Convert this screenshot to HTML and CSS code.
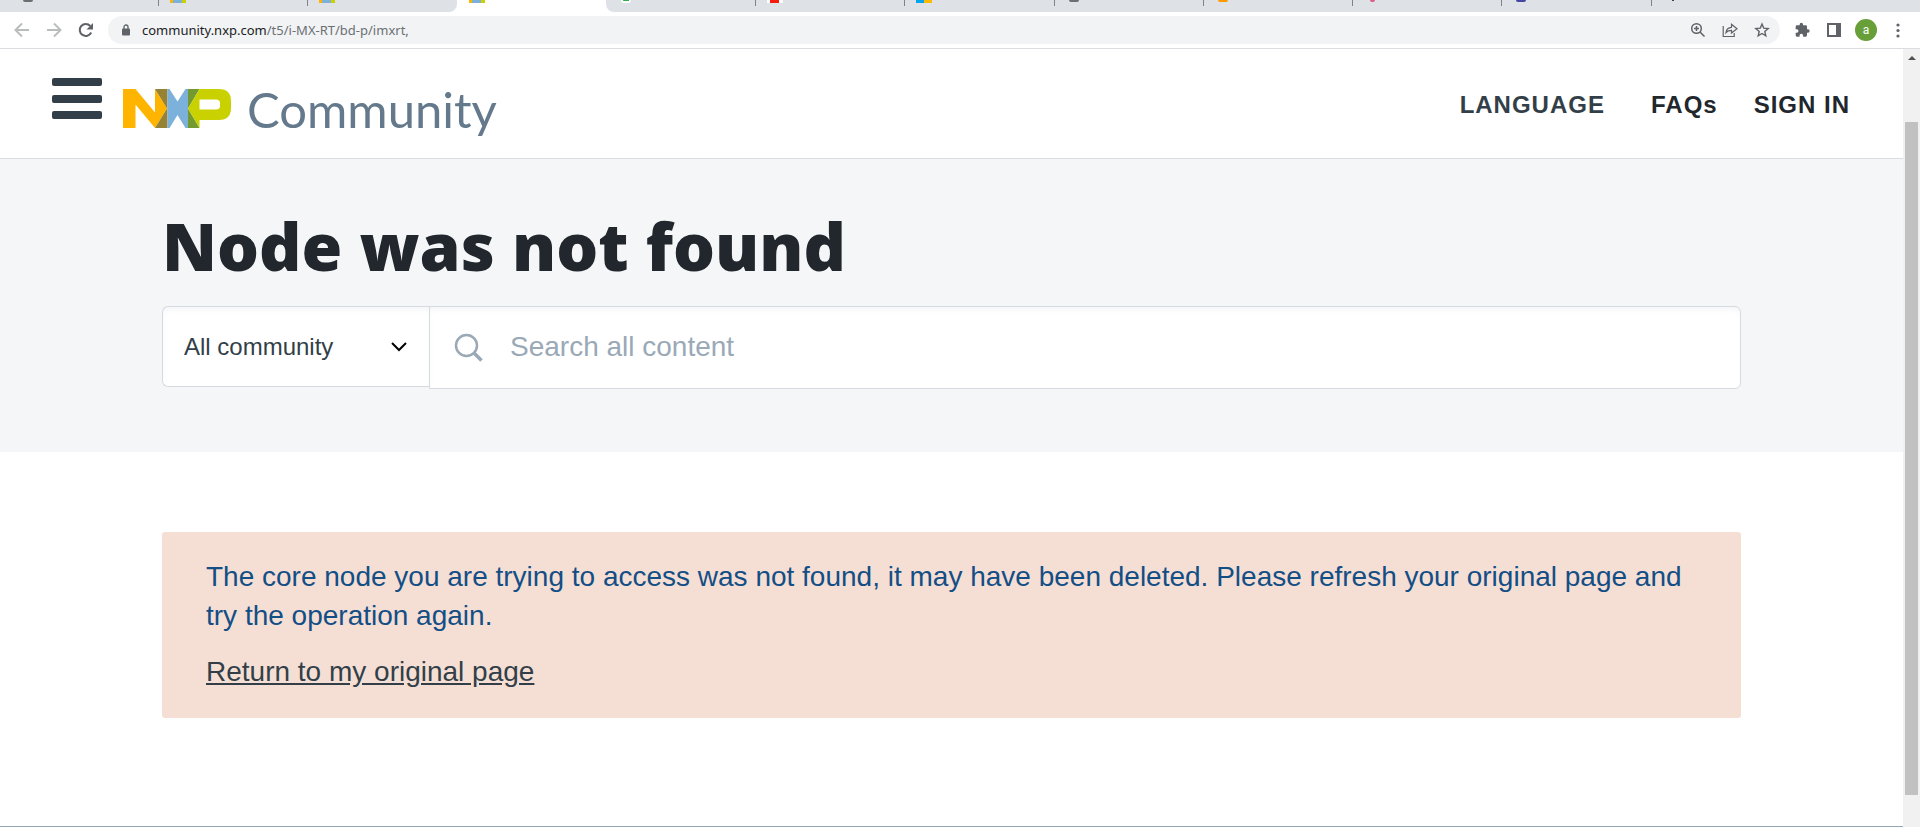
FILE: index.html
```
<!DOCTYPE html>
<html lang="en">
<head>
  <meta charset="UTF-8">
  <meta name="viewport" content="width=device-width, initial-scale=1.0">
  <title>Node was not found - NXP Community</title>
  <link rel="stylesheet" href="styles.css">
</head>
<body>
  <div class="browser">
    <div class="tabs">
      <div class="tab first"><i class="fav dot"></i></div>
      <div class="tab"><i class="fav nxp"></i></div>
      <div class="tab"><i class="fav nxp"></i></div>
      <div class="tab active"><i class="fav nxp"></i></div>
      <div class="tab"><i class="fav green"></i></div>
      <div class="tab"><i class="fav red"></i></div>
      <div class="tab"><i class="fav ms"></i></div>
      <div class="tab"><i class="fav dot"></i></div>
      <div class="tab"><i class="fav orange"></i></div>
      <div class="tab"><i class="fav pink"></i></div>
      <div class="tab"><i class="fav blue"></i></div>
      <div class="tab last"><i class="plus"></i></div>
    </div>
    <div class="toolbar">
      <button class="tool" aria-label="Back">
        <svg width="16" height="16" viewBox="0 0 16 16" fill="none" stroke="#babcbe" stroke-width="2"><path d="M15 8H2M8 1.500L1.500 8L8 14.500"/></svg>
      </button>
      <button class="tool" aria-label="Forward">
        <svg width="16" height="16" viewBox="0 0 16 16" fill="none" stroke="#babcbe" stroke-width="2"><path d="M1 8h13M8 1.500L14.500 8L8 14.500"/></svg>
      </button>
      <button class="tool" aria-label="Reload">
        <svg width="16" height="16" viewBox="0 0 16 16"><path d="M13.200 10.500A6 6 0 1 1 12.300 4" fill="none" stroke="#5f6368" stroke-width="2"/><path d="M15 1v6.500H8.500z" fill="#5f6368"/></svg>
      </button>
      <div class="address">
        <svg width="8" height="12" viewBox="0 0 8 12"><path d="M2 5V3a2 2 0 0 1 4 0v2" fill="none" stroke="#5f6368" stroke-width="1.300"/><rect y="4.500" width="8" height="7" rx="1" fill="#5f6368"/></svg>
        <span class="url">community.nxp.com<span>/t5/i-MX-RT/bd-p/imxrt,</span></span>
        <button class="tool" aria-label="Zoom">
          <svg width="16" height="16" viewBox="0 0 16 16" fill="none" stroke="#5f6368" stroke-width="1.500"><circle cx="6.500" cy="6.500" r="4.800"/><path d="M10 10l4.500 4.500M6.500 4v5M4 6.500h5"/></svg>
        </button>
        <button class="tool" aria-label="Share">
          <svg width="16" height="16" viewBox="0 0 16 16" fill="none" stroke="#5f6368" stroke-width="1.200"><path d="M1.200 4v10.500h11V11M4 10.500C4.500 7 6.500 5.500 9.500 5.300V2.300L15 6.800L9.500 11V8.300C7 8.300 5.500 8.800 4 10.500z"/></svg>
        </button>
        <button class="tool" aria-label="Bookmark">
          <svg width="16" height="16" viewBox="0 0 16 16" fill="none" stroke="#5f6368" stroke-width="1.400"><path d="M8 2l1.700 4.100l4.500.4l-3.400 2.900l1 4.400L8 11.500l-3.800 2.300l1-4.400L1.800 6.500l4.500-.4z"/></svg>
        </button>
      </div>
      <button class="tool" aria-label="Extensions">
        <svg width="16" height="16" viewBox="0 0 24 24" fill="#5f6368"><path d="M21 11h-1.500V7a2 2 0 0 0-2-2h-4V3.500a2.500 2.500 0 0 0-5 0V5h-4a2 2 0 0 0-2 2v3.800H4a2.700 2.700 0 0 1 0 5.400H2.500V20a2 2 0 0 0 2 2h3.800v-1.500a2.700 2.700 0 0 1 5.400 0V22h3.800a2 2 0 0 0 2-2v-4H21a2.500 2.500 0 0 0 0-5z"/></svg>
      </button>
      <button class="tool" aria-label="Side panel">
        <svg width="16" height="14" viewBox="0 0 16 14"><rect x="2" y="1" width="12" height="12" fill="#fff" stroke="#5f6368" stroke-width="2"/><path d="M10 1h4v12h-4z" fill="#5f6368"/></svg>
      </button>
      <button class="avatar">a</button>
      <button class="tool" aria-label="Menu">
        <svg width="16" height="16" viewBox="0 0 16 16" fill="#5f6368"><circle cx="8" cy="3" r="1.600"/><circle cx="8" cy="8.500" r="1.600"/><circle cx="8" cy="14" r="1.600"/></svg>
      </button>
    </div>
  </div>

  <div class="viewport">
    <div class="page">
      <header class="header">
        <button class="burger" aria-label="Open menu"><span></span><span></span><span></span></button>
        <a class="logo" href="#">
          <svg width="108" height="39" viewBox="0 0 108 39" aria-label="NXP">
            <path d="M0 0h12.500L32 23.500V0L44 19.500L32 39L12.500 15.500V39H0z" fill="#ffb400"/>
            <path d="M32 0h12.500v39H32L44 19.500z" fill="#958235"/>
            <path d="M44.500 0h2L54.500 12.500L62.500 0h2.500v39h-2.500L54.500 26L46.500 39h-2z" fill="#7bb1db"/>
            <path d="M65 0h11.500L65 19.500zM65 19.500L76.500 39H65z" fill="#729a30"/>
            <path d="M76.500 0H96q12 0 12 12v7q0 12-12 12H76.500v8L65 19.500zM76.500 10.500v10H93q4 0 4-3.500v-3q0-3.500-4-3.500z" fill="#c9d200" fill-rule="evenodd"/>
          </svg>
          <span>Community</span>
        </a>
        <nav class="nav">
          <a class="language" href="#">LANGUAGE</a>
          <a class="faqs" href="#">FAQs</a>
          <a href="#">SIGN IN</a>
        </nav>
      </header>

      <section class="hero">
        <h1>Node was not found</h1>
        <form class="search">
          <div class="scope">
            <select aria-label="Search scope">
              <option>All community</option>
            </select>
            <svg width="16" height="10" viewBox="0 0 16 10" fill="none" stroke="#000" stroke-width="2"><path d="M1 1l7 7l7-7"/></svg>
          </div>
          <label class="query">
            <svg width="30" height="30" viewBox="0 0 30 30" fill="none" stroke="#9aa9b6" stroke-width="2.500"><circle cx="12.500" cy="12.500" r="10.500"/><path d="M20 20l7.500 7.500" stroke-width="3.500"/></svg>
            <input type="text" placeholder="Search all content" aria-label="Search all content">
          </label>
        </form>
      </section>

      <main class="content">
        <div class="alert">
          <p>The core node you are trying to access was not found, it may have been deleted. Please refresh your original page and try the operation again.</p>
          <p><a href="#">Return to my original page</a></p>
        </div>
      </main>
      <footer class="footer"></footer>
    </div>
    <div class="scrollbar">
      <i class="arrow"></i>
      <div class="thumb"></div>
    </div>
  </div>
</body>
</html>
```
FILE: styles.css
```
* {
  box-sizing: border-box;
}

body {
  margin: 0;
  height: 100vh;
  display: flex;
  flex-direction: column;
  overflow: hidden;
  background: #fff;
  font-family: "Liberation Sans", Arial, sans-serif;
  color: #333f48;
}

button {
  border: none;
  background: none;
  padding: 0;
  cursor: pointer;
}

svg {
  display: block;
  flex: none;
}

p {
  margin: 0;
}

/* browser bar */
.browser {
  flex: none;
  border-bottom: 1px solid #dadce0;
}

.tabs {
  display: flex;
  height: 12px;
  overflow: hidden;
  background: #fff;
}

.tab {
  display: flex;
  align-items: flex-start;
  flex: 149 1 0;
  background: linear-gradient(#808387, #808387) 0 0 / 1px 6px no-repeat #dee1e6;
}

.tab.first {
  flex-grow: 158;
  background: #dee1e6;
}

.tab.last {
  flex-grow: 269;
}

.tab.active {
  background: #fff;
}

.tab:nth-child(3) {
  border-bottom-right-radius: 8px;
}

.tab.active + .tab {
  border-bottom-left-radius: 8px;
  background: #dee1e6;
}

.fav {
  width: 16px;
  height: 3px;
  margin-left: 12px;
}

.fav.nxp { background: linear-gradient(90deg, #ffb400 3px, #7bb1db 3px 12px, #c9d200 12px); }
.fav.ms { background: linear-gradient(90deg, #00a4ef 8px, #ffb900 8px); }
.fav.red { background: linear-gradient(90deg, #fff 3px, #f61c0d 3px 12px, #fff 12px); }
.fav.dot, .fav.green, .fav.orange, .fav.pink, .fav.blue {
  width: 10px;
  height: 2px;
  margin-left: 15px;
  border-radius: 0 0 5px 5px;
  background: #6c6e70;
}
.tab.first .fav { margin-left: 23px; }
.fav.green { height: 3px; border: solid #fff; border-width: 0 2px 2px; background: #34a853; }
.fav.orange { background: #ff9900; }
.fav.pink { width: 5px; margin-left: 18px; background: #dd5b85; }
.fav.blue { background: #4446a0; }

.plus {
  width: 2px;
  height: 1px;
  margin-left: 21px;
  background: #3c4043;
}

.toolbar {
  display: flex;
  align-items: center;
  gap: 16px;
  height: 36px;
  padding: 0 14px;
}

.tool {
  width: 16px;
  height: 16px;
}

.address {
  flex: 1;
  display: flex;
  align-items: center;
  gap: 16px;
  height: 28px;
  margin: 0 -2px;
  padding: 0 10px 0 14px;
  border-radius: 14px;
  background: #f1f3f4;
}

.url {
  flex: 1;
  margin-left: -4px;
  font-family: "Noto Sans", sans-serif;
  font-size: 13px;
  line-height: 20px;
  color: #202124;
}

.url span {
  color: #6c7074;
}

.avatar {
  width: 22px;
  height: 22px;
  margin: 0 -3px;
  border-radius: 50%;
  background: #689f38;
  color: #fff;
  font-family: Roboto, sans-serif;
  font-size: 12px;
}

/* page */
.viewport {
  flex: 1;
  display: flex;
  min-height: 0;
}

.page {
  flex: 1;
  display: flex;
  flex-direction: column;
}

.scrollbar {
  width: 17px;
  padding: 7px 2px 32px;
  background: #f1f1f1;
  display: flex;
  flex-direction: column;
  align-items: center;
}

.arrow {
  border: 4px solid transparent;
  border-top: none;
  border-bottom-color: #505050;
}

.thumb {
  flex: 1;
  width: 13px;
  margin-top: 62px;
  background: #c1c1c1;
}

.header {
  display: flex;
  height: 110px;
  padding: 0 53px 0 52px;
  border-bottom: 1px solid #d9dce0;
}

.burger {
  display: flex;
  flex-direction: column;
  justify-content: space-between;
  width: 50px;
  height: 41px;
  margin: 29px 21px 0 0;
}

.burger span {
  width: 50px;
  height: 8px;
  border-radius: 2px;
  background: #333f48;
}

.logo {
  display: flex;
  align-items: flex-start;
  gap: 16px;
  padding-top: 40px;
  color: #647a8c;
  text-decoration: none;
}

.logo span {
  margin-top: -12px;
  font-family: Lato, sans-serif;
  font-size: 49px;
  line-height: 64px;
}

.nav {
  display: flex;
  margin-left: auto;
  padding-top: 42px;
}

.nav a {
  color: #21272d;
  font-size: 24px;
  font-weight: bold;
  line-height: 28px;
  letter-spacing: 1px;
  text-decoration: none;
}

.nav .language {
  margin-right: 46px;
  color: #333f48;
}

.nav .faqs {
  margin-right: 36px;
}

.hero {
  padding: 46px 162px 63px;
  background: #f5f6f8;
}

h1 {
  margin: 0 0 21px;
  font-family: "Open Sans", sans-serif;
  font-size: 66px;
  font-weight: 800;
  line-height: 80px;
  color: #21272d;
}

.search {
  display: flex;
  align-items: flex-start;
}

.scope {
  display: flex;
  align-items: center;
  width: 267px;
  height: 81px;
  padding-right: 22px;
  border: 1px solid #d5dbe1;
  border-right: none;
  border-radius: 6px 0 0 6px;
  background: #fff;
  box-shadow: inset 0 4px 6px -2px #f1f3f6;
}

.scope select {
  flex: 1;
  appearance: none;
  height: 60px;
  padding: 0 0 0 21px;
  border: none;
  background: none;
  font-family: inherit;
  font-size: 24px;
  color: #333f48;
}

.query {
  flex: 1;
  display: flex;
  align-items: center;
  gap: 26px;
  height: 83px;
  padding: 0 24px;
  border: 1px solid #d5dbe1;
  border-radius: 0 6px 6px 0;
  background: #fff;
  box-shadow: inset 0 4px 6px -2px #f1f3f6;
}

.query input {
  flex: 1;
  padding: 0 0 2px;
  border: none;
  outline: none;
  background: none;
  font-family: inherit;
  font-size: 28px;
}

.query input::placeholder {
  color: #9aa9b6;
}

.content {
  padding: 80px 162px;
}

.alert {
  padding: 25px 44px 27px;
  border-radius: 3px;
  background: #f5dfd5;
  color: #134e85;
  font-size: 28px;
  line-height: 39px;
}

.alert p + p {
  margin-top: 17px;
}

.alert a {
  color: #333f48;
}

.footer {
  margin-top: auto;
  border-top: 1px solid #94a5b3;
}
```
